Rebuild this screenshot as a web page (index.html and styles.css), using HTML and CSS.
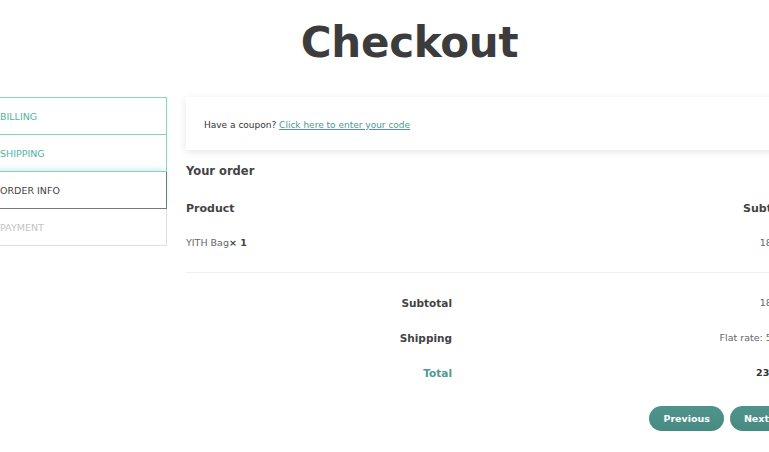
FILE: index.html
```html
<!DOCTYPE html>
<html lang="en">
<head>
  <meta charset="UTF-8" />
  <meta name="viewport" content="width=device-width, initial-scale=1.0" />
  <title>Checkout</title>
  <link rel="stylesheet" href="styles.css">
</head>
<body>
  <h1 class="page-title">Checkout</h1>

  <div class="checkout">
    <!-- step tabs -->
    <ul class="steps">
      <li class="step done">Billing</li>
      <li class="step done">Shipping</li>
      <li class="step current">Order info</li>
      <li class="step">Payment</li>
    </ul>

    <div class="main">
      <div class="coupon">
        Have a coupon? <a href="#">Click here to enter your code</a>
      </div>

      <h3 class="order-title">Your order</h3>

      <table class="order">
        <thead>
          <tr>
            <th class="left">Product</th>
            <th class="right">Subtotal</th>
          </tr>
        </thead>
        <tbody>
          <tr class="item">
            <td class="left">YITH Bag<strong>× 1</strong></td>
            <td class="right">18,00 €</td>
          </tr>
        </tbody>
        <tfoot>
          <tr>
            <th>Subtotal</th>
            <td class="right">18,00 €</td>
          </tr>
          <tr>
            <th>Shipping</th>
            <td class="right">Flat rate: 5,00 €</td>
          </tr>
          <tr class="total">
            <th>Total</th>
            <td class="right"><strong>23,00 €</strong></td>
          </tr>
        </tfoot>
      </table>

      <div class="nav">
        <button class="btn">Previous</button>
        <button class="btn">Next</button>
      </div>
    </div>
  </div>
</body>
</html>
```

FILE: styles.css
```css
body {
  margin: 0;
  font-family: "DejaVu Sans", sans-serif;
  color: #444;
  background: #fff;
  overflow: hidden;
}
.page-title {
  margin: 18px 0 0;
  padding-left: 50px;
  text-align: center;
  font-size: 42px;
  font-weight: bold;
  color: #3c3c3c;
  line-height: 50px;
  letter-spacing: -0.3px;
}
.checkout {
  display: flex;
  align-items: flex-start;
  gap: 19px;
  margin-top: 29px;
  margin-left: -10px;
  width: 830px;
}
.steps {
  list-style: none;
  margin: 0;
  padding: 0;
  width: 177px;
  flex-shrink: 0;
}
.step {
  height: 36px;
  line-height: 37px;
  padding-left: 9px;
  font-size: 9.5px;
  text-transform: uppercase;
  color: #c4c4c4;
  border: 1px solid #e0e0e0;
  border-top: none;
}
.step.done {
  color: #4fb3a2;
  border-color: #86d3c7;
}
.step.done:first-child {
  border-top: 1px solid #86d3c7;
}
.step.current {
  color: #444;
  border-color: #777;
  box-shadow: 0 -4px 6px -2px rgba(134, 211, 199, 0.5);
}
.main {
  width: 610px;
}
.coupon {
  height: 53px;
  line-height: 57px;
  padding-left: 18px;
  font-size: 9px;
  color: #333;
  background: #fff;
  box-shadow: 0 2px 8px rgba(0, 0, 0, 0.1);
}
.coupon a {
  color: #4e9a8f;
}
.order-title {
  margin: 14px 0 0;
  font-size: 11.5px;
  color: #444;
}
.order {
  width: 100%;
  margin-top: 23px;
  border-collapse: collapse;
  font-size: 9.5px;
}
.order th,
.order td {
  padding: 0;
}
.order thead th {
  font-size: 11px;
  height: 14px;
  padding-bottom: 20px;
}
.left {
  text-align: left;
}
.right {
  text-align: right;
  color: #666;
}
.order thead .right {
  color: #444;
}
.item td {
  height: 14px;
  color: #666;
  padding-bottom: 23px;
  border-bottom: 1px solid #f0f0f0;
}
.item strong {
  color: #444;
}
.order tfoot th {
  text-align: right;
  width: 266px;
  font-size: 10.5px;
  height: 35px;
}
.order tfoot tr:first-child th,
.order tfoot tr:first-child td {
  padding-top: 12px;
}
.total th {
  color: #4e9a8f;
}
.total strong {
  color: #333;
}
.nav {
  display: flex;
  justify-content: flex-end;
  gap: 6px;
  margin-top: 16px;
  margin-right: 13px;
}
.btn {
  height: 25px;
  padding: 0 14px;
  border: none;
  border-radius: 13px;
  background: linear-gradient(#4f948c, #488a82);
  color: #fff;
  font-family: inherit;
  font-size: 9.5px;
  font-weight: bold;
}
```
